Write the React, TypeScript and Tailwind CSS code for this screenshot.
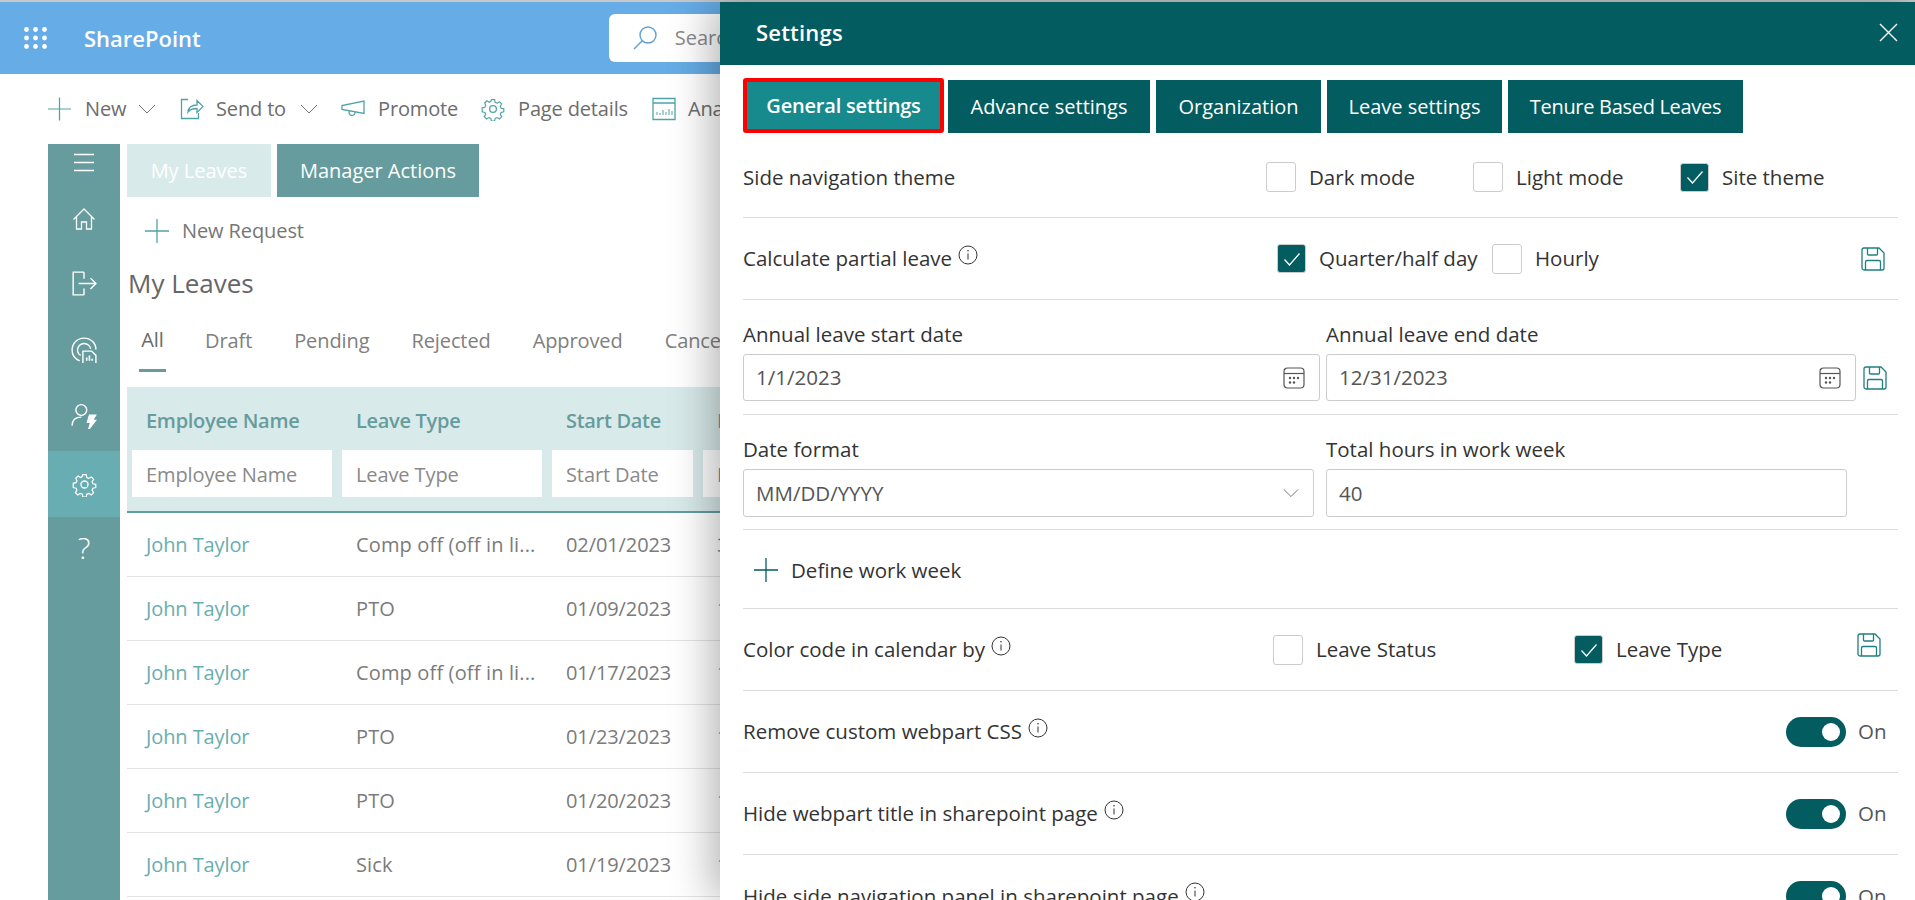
import type { ReactNode } from 'react';

const leaveRows = [
  { type: 'Comp off (off in li...', start: '02/01/2023', next: '3' },
  { type: 'PTO', start: '01/09/2023', next: '1' },
  { type: 'Comp off (off in li...', start: '01/17/2023', next: '1' },
  { type: 'PTO', start: '01/23/2023', next: '1' },
  { type: 'PTO', start: '01/20/2023', next: '1' },
  { type: 'Sick', start: '01/19/2023', next: '1' },
];

const leaveCols = 'grid grid-cols-[210px_210px_151px_1fr]';

function Icon({ className, children }: { className: string; children: ReactNode }) {
  return (
    <svg viewBox="0 0 24 24" fill="none" stroke="currentColor" strokeWidth="1.3" className={className}>
      {children}
    </svg>
  );
}

function PlusIcon({ className }: { className: string }) {
  return (
    <Icon className={className}>
      <path d="M12 0v24M0 12h24" />
    </Icon>
  );
}

function ChevronIcon({ className }: { className: string }) {
  return (
    <svg viewBox="0 0 18 18" fill="none" stroke="currentColor" strokeWidth="1" className={className}>
      <path d="M1 5l8 8 8-8" />
    </svg>
  );
}

function Waffle() {
  return (
    <svg viewBox="0 0 23 22" fill="white" className="h-[22px] w-[23px]">
      {[2.5, 11.5, 20.5].map(x =>
        [2.5, 11, 19.5].map(y => <circle key={`${x}-${y}`} cx={x} cy={y} r="2.4" />),
      )}
    </svg>
  );
}

function GearIcon({ className }: { className: string }) {
  return (
    <Icon className={className}>
      <circle cx="12" cy="12" r="3.4" />
      <path d="M10.2 1.5h3.6l.6 3 2.2 1 2.6-1.6 2.5 2.5-1.6 2.6.9 2.2 3 .6v3.4l-3 .7-.9 2.1 1.6 2.6-2.5 2.5-2.6-1.6-2.2.9-.6 3h-3.6l-.6-3-2.2-.9-2.6 1.6-2.5-2.5 1.6-2.6-.9-2.1-3-.7V10.7l3-.6.9-2.2L2.7 5.3 5.2 2.9l2.6 1.6 1.8-1z" transform="translate(1.2 1.2) scale(.9)" />
    </Icon>
  );
}

function CommandBar() {
  const item = 'flex items-center text-[20px] tracking-[-0.15px] text-[#6d6d6d]';
  return (
    <div className="flex h-[70px] items-center pl-[48px]">
      <div className={`${item} w-[132px]`}>
        <PlusIcon className="h-[24px] w-[23px] text-[#4fa3a8]" />
        <span className="ml-[14px] w-[53px]">New</span>
        <ChevronIcon className="h-[18px] w-[18px] text-[#777]" />
      </div>
      <div className={`${item} w-[161px]`}>
        <Icon className="h-[24px] w-[24px] text-[#4fa3a8]">
          <path d="M8 2.5H1.5v19h17V16M8 15c.5-4.5 4-7 9-7V3.5L23 9.5l-6 6V11.5c-4 0-7 1-9 3.500z" />
        </Icon>
        <span className="ml-[12px] w-[84px]">Send to</span>
        <ChevronIcon className="h-[18px] w-[18px] text-[#777]" />
      </div>
      <div className={`${item} w-[140px]`}>
        <Icon className="h-[24px] w-[24px] text-[#4fa3a8]">
          <path d="M23 4v12.500L1 12.500V8.500zM8 14.500c-.5 5 6 5 6 1" />
        </Icon>
        <span className="ml-[13px]">Promote</span>
      </div>
      <div className={`${item} w-[171px]`}>
        <GearIcon className="h-[24px] w-[24px] text-[#4fa3a8]" />
        <span className="ml-[13px]">Page details</span>
      </div>
      <div className={item}>
        <Icon className="h-[24px] w-[24px] text-[#4fa3a8]">
          <path d="M1 1.500h22v21H1zM1 6h22" />
          <path d="M5 18v-3M8 18v-2M11 18v-5M14 18v-3M17 18v-6M20 18v-4" strokeWidth="1" />
        </Icon>
        <span className="ml-[12px]">Analytics</span>
      </div>
    </div>
  );
}

function Sidebar() {
  const slot = 'flex items-center justify-center text-white';
  return (
    <div className="flex h-[756px] w-[72px] shrink-0 flex-col bg-[#669c9d]">
      <div className={`${slot} h-[38px]`}>
        <Icon className="h-[24px] w-[24px]">
          <path d="M2 3.500h20M2 11.500h20M2 19.500h20" />
        </Icon>
      </div>
      <div className={`${slot} h-[74px]`}>
        <Icon className="h-[24px] w-[24px]">
          <path d="M1.500 12.500 12 2l10.500 10.500M4.500 10v12h5v-7h5v7h5V10" />
        </Icon>
      </div>
      <div className={`${slot} h-[54px]`}>
        <Icon className="h-[26px] w-[26px]">
          <path d="M12 2H2v21h10M12 2v6M12 17v6M7 12.500h16M18 7.500l5 5-5 5" />
        </Icon>
      </div>
      <div className={`${slot} h-[80px]`}>
        <Icon className="h-[26px] w-[26px]">
          <path d="M8 22C3 20 1 16 1 12 1 6 6 1 12 1c6 0 11 4.500 11 10.500M9 17c-2-1-3-3-3-5 0-3.500 3-6 6-6 3.500 0 6 2.500 6 5" />
          <path d="M11 13h8l4 4v8H11z" />
          <path d="M14.500 22v-3M17 22v-5M19.500 22v-2" strokeWidth="1.500" />
        </Icon>
      </div>
      <div className={`${slot} mb-[9px] h-[52px]`}>
        <Icon className="h-[26px] w-[26px]">
          <circle cx="9.500" cy="6.500" r="5" />
          <path d="M1 21c0-5 3-8 8.500-8" />
          <path d="M17 11h6l-3 5h3l-7 9 2-7h-3z" fill="currentColor" strokeWidth="1" />
        </Icon>
      </div>
      <div className={`${slot} h-[66px] bg-[#68adb2]`}>
        <GearIcon className="h-[25px] w-[25px]" />
      </div>
      <div className={`${slot} h-[62px] text-[30px] font-light leading-none`}>?</div>
    </div>
  );
}

function LeavesPage() {
  const pivots = ['Pending', 'Rejected', 'Approved', 'Cancelled'];
  const filter = 'mx-[5px] flex h-[47px] items-center bg-white pl-[14px] pt-[2px] text-[20px] tracking-[-0.1px] text-[#8a8a8a]';
  return (
    <div className="min-w-0 flex-1 overflow-hidden">
      <div className="flex gap-[6px]">
        <div className="flex h-[53px] w-[144px] items-center justify-center bg-[#d9eaea] text-[20px] text-white">My Leaves</div>
        <div className="flex h-[53px] w-[202px] items-center justify-center bg-[#669c9d] text-[20px] text-white">Manager Actions</div>
      </div>
      <div className="flex h-[68px] items-center pl-[18px] text-[20px] tracking-[-0.1px] text-[#767676]">
        <PlusIcon className="h-[24px] w-[24px] text-[#4fa3a8]" />
        <span className="ml-[13px]">New Request</span>
      </div>
      <div className="flex h-[36px] items-center pl-[1px] text-[26px] text-[#666]">My Leaves</div>
      <div className="mt-[21px] flex h-[65px] text-[20px] tracking-[-0.1px] text-[#808080]">
        <div className="ml-[12px] flex h-[50px] w-[27px] items-center justify-center border-b-[3px] border-[#669c9d] pb-[12px] text-[#6a6a6a]">All</div>
        <div className="ml-[39px] flex h-[50px] items-center pb-[12px]">Draft</div>
        {pivots.map(label => (
          <div key={label} className="ml-[42px] flex h-[50px] items-center whitespace-nowrap pb-[12px]">{label}</div>
        ))}
      </div>
      <div className="h-[126px] border-b-2 border-[#5f9ea0] bg-[#d9eaea]">
        <div className={`${leaveCols} h-[63px] items-center pl-[19px] pt-[4px] text-[20px] font-semibold tracking-[-0.3px] text-[#669c9d]`}>
          <span>Employee Name</span>
          <span>Leave Type</span>
          <span>Start Date</span>
          <span>D</span>
        </div>
        <div className={leaveCols}>
          <div className={filter}>Employee Name</div>
          <div className={filter}>Leave Type</div>
          <div className={filter}>Start Date</div>
          <div className={filter}>D</div>
        </div>
      </div>
      {leaveRows.map((row, index) => (
        <div key={index} className={`${leaveCols} h-[64px] items-center border-b border-[#e3e3e3] pl-[19px] text-[20px] tracking-[-0.1px] text-[#7b7b7b]`}>
          <span className="text-[#68adb2]">John Taylor</span>
          <span className="whitespace-nowrap tracking-[0.15px]">{row.type}</span>
          <span>{row.start}</span>
          <span>{row.next}</span>
        </div>
      ))}
    </div>
  );
}

function InfoIcon() {
  return (
    <svg viewBox="0 0 20 20" fill="none" stroke="#333" strokeWidth="1" className="mb-[8px] ml-[6px] h-[20px] w-[20px] shrink-0">
      <circle cx="10" cy="10" r="9" />
      <path d="M10 8.500v6" />
      <circle cx="10" cy="5.800" r=".8" fill="#333" stroke="none" />
    </svg>
  );
}

function SaveIcon({ className }: { className: string }) {
  return (
    <Icon className={`h-[24px] w-[24px] text-[#1f7f82] ${className}`}>
      <path d="M3 1h15l5 5v15a2 2 0 0 1-2 2H3a2 2 0 0 1-2-2V3a2 2 0 0 1 2-2z" />
      <path d="M6.500 1v6a1 1 0 0 0 1 1h8a1 1 0 0 0 1-1V1M4.500 23v-8a1.500 1.500 0 0 1 1.500-1.500h12a1.500 1.500 0 0 1 1.500 1.500v8" />
    </Icon>
  );
}

function CalendarIcon() {
  return (
    <svg viewBox="0 0 22 22" fill="none" stroke="#555" strokeWidth="1.200" className="h-[22px] w-[22px]">
      <rect x="1" y="1" width="20" height="20" rx="3.500" />
      <path d="M1 6.500h20" />
      <g fill="#555" stroke="none">
        <circle cx="7" cy="11" r="1.200" /><circle cx="11" cy="11" r="1.200" /><circle cx="15" cy="11" r="1.200" />
        <circle cx="7" cy="15.500" r="1.200" /><circle cx="11" cy="15.500" r="1.200" />
      </g>
    </svg>
  );
}

function CheckOption({ label, checked, className }: { label: string; checked?: boolean; className: string }) {
  return (
    <div className={`flex items-center ${className}`}>
      {checked ? (
        <div className="flex h-[29px] w-[29px] shrink-0 items-center justify-center rounded-[3px] border border-[#ccc] bg-[#035c60]">
          <svg viewBox="0 0 18 18" fill="none" stroke="white" strokeWidth="1.300" className="h-[18px] w-[18px]">
            <path d="M1.500 9.500 6.500 15 16.500 3.500" />
          </svg>
        </div>
      ) : (
        <div className="h-[30px] w-[30px] shrink-0 rounded-[3px] border border-[#ccc] bg-white" />
      )}
      <span className="ml-[13px] whitespace-nowrap">{label}</span>
    </div>
  );
}

function ToggleRow({ label, last }: { label: string; last?: boolean }) {
  return (
    <div className={`flex h-[82px] items-center ${last ? '' : 'border-b border-[#ddd]'}`}>
      <span className="whitespace-nowrap">{label}</span>
      <InfoIcon />
      <div className="ml-auto flex h-[30px] w-[60px] items-center justify-end rounded-full bg-[#035c60] pr-[6px]">
        <div className="h-[18px] w-[18px] rounded-full bg-white" />
      </div>
      <span className="ml-[12px] w-[40px] text-[#555]">On</span>
    </div>
  );
}

function FieldLabel({ children }: { children: ReactNode }) {
  return <div className="h-[24px] leading-[24px]">{children}</div>;
}

function Field({ value, className, children }: { value: string; className: string; children?: ReactNode }) {
  return (
    <div className={`flex items-center justify-between rounded-[3px] border border-[#ccc] pl-[12px] pr-[14px] text-[#555] ${className}`}>
      <span>{value}</span>
      {children}
    </div>
  );
}

function SettingsPanel() {
  const tab = 'flex h-[53px] items-center justify-center bg-[#035c60] text-[20px] text-white';
  return (
    <div className="absolute bottom-0 right-0 top-[2px] w-[1195px] overflow-hidden bg-white text-[20.5px] text-[#333] shadow-[-8px_0_40px_rgba(0,0,0,0.3)]">
      <div className="flex h-[63px] items-center justify-between bg-[#035c60] pb-[2px] pl-[36px] pr-[17px] text-white">
        <span className="text-[22px] font-semibold tracking-[0.2px]">Settings</span>
        <svg viewBox="0 0 19 19" fill="none" stroke="currentColor" strokeWidth="1.400" className="h-[19px] w-[19px]">
          <path d="M1 1l17 17M18 1 1 18" />
        </svg>
      </div>
      <div className="pl-[23px] pr-[17px]">
        <div className="mt-[15px] flex gap-[6px]">
          <div className="-mt-[2px] mr-[-2px] flex h-[55px] w-[201px] items-center justify-center rounded-[3px] border-4 border-[#f00] bg-[#168a8d] text-[20px] font-semibold tracking-[-0.2px] text-white">General settings</div>
          <div className={`${tab} w-[202px]`}>Advance settings</div>
          <div className={`${tab} w-[165px]`}>Organization</div>
          <div className={`${tab} w-[175px]`}>Leave settings</div>
          <div className={`${tab} w-[235px] tracking-[-0.3px]`}>Tenure Based Leaves</div>
        </div>

        <div className="flex h-[85px] items-center border-b border-[#ddd] pt-[4px]">
          <span className="w-[523px]">Side navigation theme</span>
          <CheckOption label="Dark mode" className="w-[207px]" />
          <CheckOption label="Light mode" className="w-[207px]" />
          <CheckOption label="Site theme" checked className="" />
        </div>

        <div className="flex h-[82px] items-center border-b border-[#ddd]">
          <div className="flex w-[534px] items-center">
            <span>Calculate partial leave</span>
            <InfoIcon />
          </div>
          <CheckOption label="Quarter/half day" checked className="w-[215px]" />
          <CheckOption label="Hourly" className="" />
          <SaveIcon className="ml-auto mr-[13px]" />
        </div>

        <div className="h-[115px] border-b border-[#ddd] pt-[22px]">
          <div className="grid grid-cols-[583px_1fr]">
            <FieldLabel>Annual leave start date</FieldLabel>
            <FieldLabel>Annual leave end date</FieldLabel>
          </div>
          <div className="mt-[8px] flex items-center">
            <Field value="1/1/2023" className="h-[47px] w-[577px]">
              <CalendarIcon />
            </Field>
            <Field value="12/31/2023" className="ml-[6px] h-[47px] w-[530px]">
              <CalendarIcon />
            </Field>
            <SaveIcon className="ml-[7px]" />
          </div>
        </div>

        <div className="h-[115px] border-b border-[#ddd] pt-[22px]">
          <div className="grid grid-cols-[583px_1fr]">
            <FieldLabel>Date format</FieldLabel>
            <FieldLabel>Total hours in work week</FieldLabel>
          </div>
          <div className="mt-[8px] flex">
            <Field value="MM/DD/YYYY" className="h-[48px] w-[571px]">
              <ChevronIcon className="h-[16px] w-[16px] text-[#666]" />
            </Field>
            <Field value="40" className="ml-[12px] h-[48px] w-[521px]" />
          </div>
        </div>

        <div className="flex h-[79px] items-center border-b border-[#ddd] pl-[11px] pt-[2px]">
          <PlusIcon className="h-[24px] w-[24px] text-[#035c60]" />
          <span className="ml-[13px] font-medium">Define work week</span>
        </div>

        <div className="flex h-[82px] items-center border-b border-[#ddd]">
          <div className="flex w-[530px] items-center">
            <span>Color code in calendar by</span>
            <InfoIcon />
          </div>
          <CheckOption label="Leave Status" className="w-[301px]" />
          <CheckOption label="Leave Type" checked className="" />
          <SaveIcon className="mb-[10px] ml-auto mr-[17px]" />
        </div>

        <ToggleRow label="Remove custom webpart CSS" />
        <ToggleRow label="Hide webpart title in sharepoint page" />
        <ToggleRow label="Hide side navigation panel in sharepoint page" last />
      </div>
    </div>
  );
}

export default function App() {
  return (
    <div className="relative h-[900px] w-[1915px] overflow-hidden bg-white font-['Open_Sans',sans-serif]">
      <div className="h-[2px] bg-[#c8c8c8]" />
      <div className="flex h-[72px] items-center bg-[#66ace6] pl-[24px]">
        <Waffle />
        <span className="ml-[37px] text-[22px] font-semibold text-white">SharePoint</span>
        <div className="ml-[408px] flex h-[48px] w-[400px] items-center rounded-[6px] bg-white pl-[24px]">
          <svg viewBox="0 0 24 24" fill="none" stroke="#5f9fd6" strokeWidth="1.400" className="h-[24px] w-[24px]">
            <circle cx="15" cy="9" r="8" />
            <path d="M9.500 14.500 1 23" />
          </svg>
          <span className="ml-[18px] text-[20px] text-[#8a8a8a]">Search</span>
        </div>
      </div>
      <CommandBar />
      <div className="flex gap-[7px] pl-[48px]">
        <Sidebar />
        <LeavesPage />
      </div>
      <SettingsPanel />
    </div>
  );
}
